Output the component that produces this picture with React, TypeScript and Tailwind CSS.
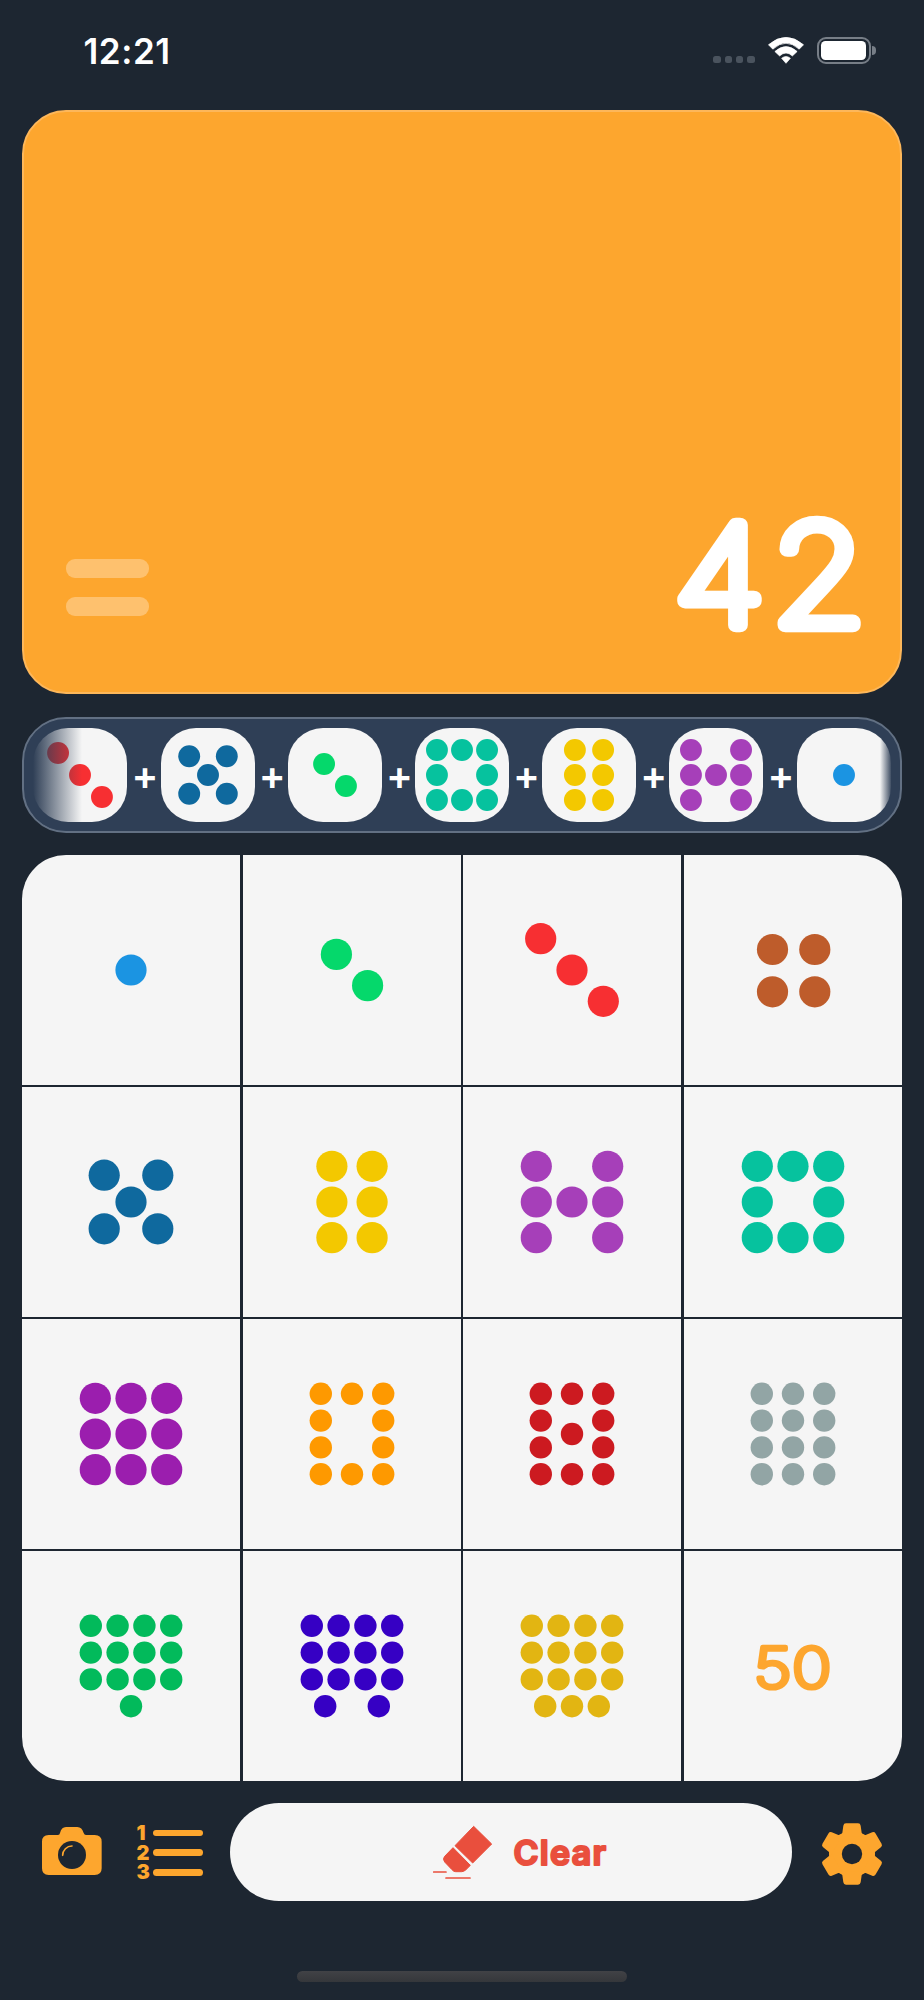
import { Fragment } from "react";

type Pattern = {
  color: string;
  r: number;
  dots: number[][];
};

const BIG = 15.6;
const SMALL = 11.2;

// every combination of the given x and y offsets, measured from the centre
const grid = (xs: number[], ys: number[]) =>
  ys.flatMap((y) => xs.map((x) => [x, y]));

const thirds = [-35.7, 0, 35.7];
const quarters = [-40.2, -13.4, 13.4, 40.2];
const columns = [-31.2, 0, 31.2];
const ring = [
  ...grid(columns, [-40.2, 40.2]),
  ...grid([-31.2, 31.2], [-13.4, 13.4]),
];
const twelve = grid(quarters, [-40.2, -13.4, 13.4]);

const patterns: Record<number, Pattern> = {
  1: { color: "#1b94e2", r: BIG, dots: [[0, 0]] },
  2: {
    color: "#05d86b",
    r: BIG,
    dots: [
      [-15.6, -15.6],
      [15.6, 15.6],
    ],
  },
  3: {
    color: "#f72f32",
    r: BIG,
    dots: [
      [-31.3, -31.3],
      [0, 0],
      [31.3, 31.3],
    ],
  },
  4: { color: "#be5c2b", r: BIG, dots: grid([-20.5, 21.8], [-20.5, 21.8]) },
  5: {
    color: "#0f699e",
    r: BIG,
    dots: [...grid([-26.8, 26.8], [-26.8, 26.8]), [0, 0]],
  },
  6: { color: "#f3c800", r: BIG, dots: grid([-20.1, 20.1], thirds) },
  7: {
    color: "#a63fb9",
    r: BIG,
    dots: [...grid([-35.7, 35.7], thirds), [0, 0]],
  },
  8: {
    color: "#06c29e",
    r: BIG,
    dots: grid(thirds, thirds).filter(([x, y]) => x !== 0 || y !== 0),
  },
  9: { color: "#9b1eae", r: BIG, dots: grid(thirds, thirds) },
  10: { color: "#fe9900", r: SMALL, dots: ring },
  11: { color: "#cc1a20", r: SMALL, dots: [...ring, [0, 0]] },
  12: { color: "#92a5a5", r: SMALL, dots: grid(columns, quarters) },
  13: { color: "#02ba5b", r: SMALL, dots: [...twelve, [0, 40.2]] },
  14: {
    color: "#3600c4",
    r: SMALL,
    dots: [...twelve, [-26.8, 40.2], [26.8, 40.2]],
  },
  15: {
    color: "#e2b512",
    r: SMALL,
    dots: [...twelve, ...grid([-26.8, 0, 26.8], [40.2])],
  },
};

const keys = [1, 2, 3, 4, 5, 6, 7, 8, 9, 10, 11, 12, 13, 14, 15];
const history = [3, 5, 2, 8, 6, 7, 1];

const Dots = ({ value, className }: { value: number; className: string }) => {
  const { color, r, dots } = patterns[value];
  return (
    <svg viewBox="-67 -67 134 134" className={className} fill={color}>
      {dots.map(([x, y]) => (
        <circle key={`${x},${y}`} cx={x} cy={y} r={r} />
      ))}
    </svg>
  );
};

const WifiIcon = () => (
  <svg
    viewBox="0 0 106 80"
    className="h-[27px] w-9 fill-white stroke-white"
    strokeWidth="2"
    strokeLinejoin="round"
  >
    <path d="M1 23Q53 -21 105 23L92 36Q53 1 14 36Z" />
    <path d="M20 43Q53 14 86 43L72 56Q53 39 34 56Z" />
    <path d="M40 63Q53 53 66 63L53 78Z" />
  </svg>
);

const CameraIcon = () => (
  <svg viewBox="0 0 180 144" className="mb-[3px] h-12 w-[60px]">
    <path
      fill="#fda62e"
      d="M20 24H48Q53 24 54 18Q58 0 72 0H106Q120 0 125 18Q127 24 132 24H158Q179 24 179 44V124Q179 144 158 144H20Q0 144 0 124V44Q0 24 20 24Z"
    />
    <circle cx="90" cy="84" r="42" fill="#1d2631" />
    <path
      d="M62 85A28 28 0 0 1 90 57"
      fill="none"
      stroke="#fda62e"
      strokeWidth="5"
      strokeLinecap="round"
    />
  </svg>
);

const EraserIcon = () => (
  <svg viewBox="0 0 180 164" className="h-[54.7px] w-[60px]" fill="#e94f3d">
    <g stroke="#e94f3d" strokeWidth="3" strokeLinejoin="round">
      <path d="M122 4L176 57L119 114L66 62Z" />
      <path d="M60 68L112 121L98 135Q92 140 86 140H68Q62 140 57 134L35 111Q28 102 35 94Z" />
    </g>
    <path
      d="M2 141H39M39 159H111"
      stroke="#e94f3d"
      strokeWidth="5"
      strokeLinecap="round"
    />
  </svg>
);

const GearIcon = () => (
  <svg viewBox="-93 -93 186 186" className="size-[62px]" fill="#fda62e">
    <circle r="69" />
    {[0, 60, 120, 180, 240, 300].map((angle) => (
      <path
        key={angle}
        transform={`rotate(${angle})`}
        d="M-42 -53Q-30 -58 -29 -64L-26 -85Q-25 -92 -18 -92H18Q25 -92 26 -85L29 -64Q30 -58 42 -53Z"
      />
    ))}
    <circle r="30.5" fill="#1d2631" />
  </svg>
);

const StatusBar = () => (
  <div className="flex h-[109.5px] shrink-0 justify-between pt-[30px] pr-[26px] pl-[61px]">
    <div className="text-[35px] leading-[42px] font-semibold tracking-[0.6px] text-white">
      12:21
    </div>
    <div className="flex h-[41px] items-center">
      <div className="mt-[18px] mr-[13px] flex gap-[3.6px]">
        {[0, 1, 2, 3].map((i) => (
          <div key={i} className="size-[7.6px] rounded-[2.5px] bg-[#4a535e]" />
        ))}
      </div>
      <WifiIcon />
      <div className="ml-[13px] h-[27px] w-[54px] rounded-[9px] border-2 border-[#777e87] p-[2.3px]">
        <div className="h-full rounded-[4.5px] bg-white" />
      </div>
      <div className="ml-[1.5px] h-[9px] w-[3.5px] rounded-r-full bg-[#777e87]" />
    </div>
  </div>
);

const App = () => {
  return (
    <div className="flex h-[2000px] w-[924px] flex-col bg-[#1d2631] px-[22.4px] font-['Inter','Liberation_Sans',sans-serif]">
      <StatusBar />

      <div className="flex h-[584.8px] shrink-0 items-end justify-between rounded-[44px] border-2 border-[#fdb75a] bg-[#fda62e]">
        <div className="mb-[76px] ml-[42px] flex flex-col gap-[19px]">
          <div className="h-[19px] w-[83px] rounded-[9px] bg-[#fec16e]" />
          <div className="h-[19px] w-[83px] rounded-[9px] bg-[#fec16e]" />
        </div>
        <svg className="mr-9 mb-[36px] h-[160px] w-[200px] overflow-visible">
          <text
            x="10"
            y="129"
            textLength="199"
            lengthAdjust="spacingAndGlyphs"
            letterSpacing="6"
            fontSize="138"
            fontWeight="100"
            fill="#fff"
            stroke="#fff"
            strokeWidth="14.6"
            strokeLinejoin="round"
          >
            42
          </text>
        </svg>
      </div>

      <div className="relative mt-[22.4px] flex h-[116px] shrink-0 items-center overflow-hidden rounded-[44px] border-2 border-[#627083] bg-[#2f3f56] pl-[9px]">
        {history.map((value, i) => (
          <Fragment key={i}>
            {i > 0 && (
              <div className="flex w-[33.2px] shrink-0 justify-center pt-[2px] pl-[2px] text-[40px] leading-none font-semibold text-white">
                +
              </div>
            )}
            <div className="size-[94px] shrink-0 overflow-hidden rounded-[35px] bg-[#f5f5f5]">
              <Dots value={value} className="size-[94px]" />
            </div>
          </Fragment>
        ))}
        <div className="absolute inset-y-0 left-[9px] w-[49px] bg-linear-to-r from-[#2f3f56] to-[#2f3f56]/0" />
        <div className="absolute inset-y-0 right-[8px] w-[12px] bg-linear-to-l from-[#2f3f56] to-[#2f3f56]/0" />
      </div>

      <div className="mt-[22px] grid h-[926px] shrink-0 grid-cols-4 grid-rows-4 gap-x-[2.5px] gap-y-[2px] overflow-hidden rounded-[44px]">
        {keys.map((value) => (
          <button
            key={value}
            className="flex items-center justify-center bg-[#f5f5f5]"
          >
            <Dots value={value} className="size-[134px]" />
          </button>
        ))}
        <button className="flex items-center justify-center bg-[#f5f5f5]">
          <svg className="h-[60px] w-[90px] overflow-visible">
            <text
              x="5.5"
              y="51.5"
              textLength="78"
              lengthAdjust="spacingAndGlyphs"
              fontSize="56.5"
              fontWeight="200"
              fill="#fda62e"
              stroke="#fda62e"
              strokeWidth="4.4"
              strokeLinejoin="round"
            >
              50
            </text>
          </svg>
        </button>
      </div>

      <div className="mt-[22px] flex h-[99px] shrink-0 items-center pr-[18px] pl-5">
        <CameraIcon />
        <div className="mt-[1px] ml-[34px] flex flex-col">
          {[1, 2, 3].map((n) => (
            <div key={n} className="flex h-[19.8px] items-center">
              <div className="w-[16.5px] text-[20px] leading-[18px] font-black text-[#fda62e]">
                {n}
              </div>
              <div className="h-[6.4px] w-[50px] rounded-full bg-[#fda62e]" />
            </div>
          ))}
        </div>
        <button className="ml-[27px] flex h-[98.5px] w-[562px] shrink-0 items-center rounded-[49px] bg-[#f5f5f5] pl-[203px]">
          <EraserIcon />
          <svg className="ml-5 h-11 w-[100px] overflow-visible">
            <text
              x="0.5"
              y="34.5"
              fontSize="34"
              fontWeight="600"
              letterSpacing="1.3"
              fill="#e94f3d"
              stroke="#e94f3d"
              strokeWidth="2.2"
              strokeLinejoin="round"
            >
              Clear
            </text>
          </svg>
        </button>
        <div className="mt-[3px] ml-[29.5px] shrink-0">
          <GearIcon />
        </div>
      </div>

      <div className="mx-auto mt-[69px] h-[11px] w-[330px] shrink-0 rounded-full bg-linear-to-b from-[#414246] to-[#35373b]" />
    </div>
  );
};

export default App;
